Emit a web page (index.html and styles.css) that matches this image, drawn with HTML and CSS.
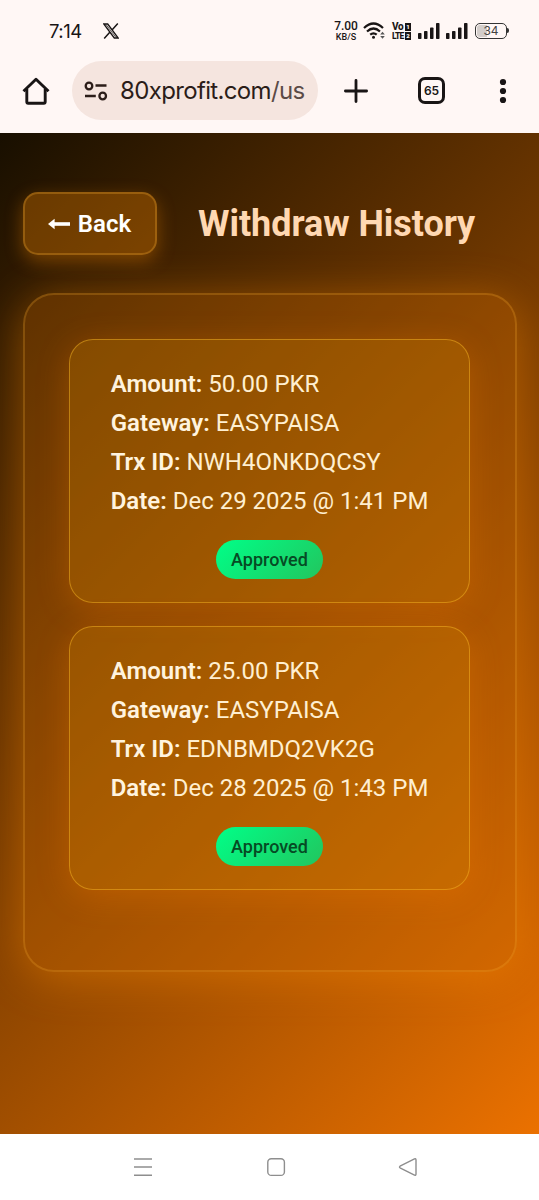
FILE: index.html
```html
<!DOCTYPE html>
<html lang="en">
<head>
<meta charset="utf-8">
<title>Withdraw History</title>
<link rel="stylesheet" href="styles.css">
</head>
<body>
<div class="phone">
  <header class="chrome">
    <div class="status">
      <span class="clock">7:14</span>
      <svg class="x-logo" width="16" height="16" viewBox="0 0 16 16" fill="none" stroke="#191515">
        <path d="M.8 1H4.7L15.2 15H11.3Z" stroke-width="1.3"/><path d="M3 1.5L13 14.5" stroke-width=".7"/><path d="M14.8.6L9 7.1M7 9L1.2 15.4" stroke-width="1.5"/>
      </svg>
      <div class="speed"><span class="rate">7.00</span><span class="unit">KB/S</span></div>
      <svg class="wifi" width="23" height="18" viewBox="0 0 23 18" fill="none" stroke="#191515" stroke-width="2.200">
        <path d="M1 6Q10.500 -3 20 6"/><path d="M4 9.500Q10.500 3.500 17 9.500"/><path d="M7.200 12.700Q10.500 10 13.700 12.700"/><circle cx="10.500" cy="15.300" r="1.500" fill="#191515" stroke="none"/>
        <path d="M17.200 12.500L19.500 9.800L21.800 12.500ZM17.200 14L19.500 16.700L21.800 14Z" fill="#555" stroke="none"/>
      </svg>
      <div class="volte">
        <span class="vo">Vo<b>1</b></span><span class="lte">LTE<b>2</b></span>
      </div>
      <svg class="signal" width="22" height="16" viewBox="0 0 22 16" fill="#191515"><rect x="0" y="10" width="3.500" height="6" rx=".8"/><rect x="6" y="8" width="3.500" height="8" rx=".8"/><rect x="12" y="4.500" width="3.500" height="11.500" rx=".8"/><rect x="18" y="0" width="3.500" height="16" rx=".8"/></svg>
      <svg class="signal second" width="22" height="16" viewBox="0 0 22 16" fill="#191515"><rect x="0" y="10" width="3.500" height="6" rx=".8"/><rect x="6" y="8" width="3.500" height="8" rx=".8"/><rect x="12" y="4.500" width="3.500" height="11.500" rx=".8"/><rect x="18" y="0" width="3.500" height="16" rx=".8"/></svg>
      <div class="battery">34</div>
    </div>
    <div class="toolbar">
      <svg class="home" width="28" height="28" viewBox="0 0 28 28" fill="none" stroke="#191515" stroke-width="2.900" stroke-linejoin="round"><path d="M1.500 14.200L14 2.200L26.500 14.200"/><path d="M4.800 12V24.800Q4.800 26.200 6.200 26.200H21.800Q23.200 26.200 23.200 24.800V12"/></svg>
      <div class="address">
        <svg width="24" height="20" viewBox="0 0 24 20" fill="none" stroke="#2b1d19" stroke-width="2.300"><circle cx="5" cy="5" r="3.300"/><path d="M11.500 4.500H22.500M1 15H11.800"/><circle cx="18.700" cy="15" r="3.300"/></svg>
        <span class="url">80xprofit.com<span class="path">/us</span></span>
      </div>
      <svg class="plus" width="24" height="24" viewBox="0 0 24 24" stroke="#191515" stroke-width="2.800" stroke-linecap="round"><path d="M12 1.400V22.600M1.400 12H22.600"/></svg>
      <div class="tabs">65</div>
      <svg class="more" width="8" height="26" viewBox="0 0 8 26" fill="#191515"><circle cx="4" cy="4" r="3.100"/><circle cx="4" cy="13" r="3.100"/><circle cx="4" cy="22" r="3.100"/></svg>
    </div>
  </header>

  <main class="page">
    <div class="heading">
      <a class="back">
        <svg width="22" height="14" viewBox="0 0 22 14" fill="#fff"><path d="M0 7L6.600 1.800V12.200Z"/><path d="M5 5.200H22V8.800H5Z"/></svg>
        <span>Back</span>
      </a>
      <h1>Withdraw History</h1>
    </div>
    <section class="panel">
      <article class="record">
        <div class="details">
          <p><strong>Amount:</strong> 50.00 PKR</p>
          <p><strong>Gateway:</strong> EASYPAISA</p>
          <p><strong>Trx ID:</strong> NWH4ONKDQCSY</p>
          <p><strong>Date:</strong> Dec 29 2025 @ 1:41 PM</p>
        </div>
        <span class="badge">Approved</span>
      </article>
      <article class="record">
        <div class="details">
          <p><strong>Amount:</strong> 25.00 PKR</p>
          <p><strong>Gateway:</strong> EASYPAISA</p>
          <p><strong>Trx ID:</strong> EDNBMDQ2VK2G</p>
          <p><strong>Date:</strong> Dec 28 2025 @ 1:43 PM</p>
        </div>
        <span class="badge">Approved</span>
      </article>
    </section>
  </main>

  <nav class="navbar">
    <svg width="20" height="20" viewBox="0 0 20 20" stroke="#8e8e8e" stroke-width="1.400"><path d="M1 2H19M1 10H19M1 18.300H19"/></svg>
    <svg width="20" height="20" viewBox="0 0 20 20" fill="none" stroke="#8e8e8e" stroke-width="1.400"><rect x="1.800" y="1.800" width="16.600" height="16.600" rx="3.500"/></svg>
    <svg width="20" height="20" viewBox="0 0 20 20" fill="none" stroke="#8e8e8e" stroke-width="1.400" stroke-linejoin="round"><path d="M2 9.200L16.500 1.900Q18 1.400 18 3V17Q18 18.600 16.500 18.100L2 10.800Q1 10 2 9.200Z"/></svg>
  </nav>
</div>
</body>
</html>
```

FILE: styles.css
```css
* { box-sizing: border-box; }
body { margin: 0; font-family: Roboto, sans-serif; }
.phone { width: 539px; height: 1200px; display: flex; flex-direction: column; overflow: hidden; }

.chrome { height: 133px; flex: none; background: #fff7f5; color: #191515; }
.status { display: flex; align-items: center; height: 61px; padding: 1px 30px 0 49px; }
.clock { width: 54px; font: 400 18.5px Inter, sans-serif; letter-spacing: -0.5px; }
.speed { display: flex; flex-direction: column; align-items: center; gap: 1px; width: 24px; margin-left: 215px; font-family: Roboto, sans-serif; font-weight: 500; }
.rate { font-size: 12px; line-height: 11px; letter-spacing: -0.1px; }
.unit { font-size: 9px; line-height: 9px; }
.wifi { margin-left: 5px; }
.volte { display: flex; flex-direction: column; gap: 1px; width: 19px; margin-left: 6px; font-weight: 800; font-size: 10px; line-height: 8px; }
.volte span { display: flex; justify-content: space-between; align-items: center; height: 8px; letter-spacing: -0.4px; }
.volte .lte { font-size: 8.5px; letter-spacing: -0.8px; }
.volte b { width: 6px; height: 8px; background: #191515; color: #fff7f5; font-size: 6px; line-height: 8px; text-align: center; letter-spacing: 0; }
.signal { margin-left: 7px; }
.signal.second { margin-left: 6px; }
.battery { position: relative; width: 32px; height: 16px; margin-left: 7px; border: 1px solid #333; border-radius: 5px; background: linear-gradient(90deg, #d3cdca 36%, transparent 36%); background-clip: content-box; padding: 1px; color: #444; font: 400 12px/12px Inter, sans-serif; text-align: center; }
.battery::after { content: ""; position: absolute; right: -3px; top: 4px; width: 2px; height: 5px; background: #333; border-radius: 0 2px 2px 0; }

.toolbar { display: flex; align-items: center; height: 59px; padding: 0 32px 0 22px; }
.address { display: flex; align-items: center; width: 246px; height: 59px; margin-left: 22px; padding-left: 12px; border-radius: 30px; background: #f5e5df; }
.url { margin-left: 12px; font: 400 24px Inter, sans-serif; letter-spacing: -0.65px; color: #2b1d19; white-space: nowrap; }
.path { color: #5b4b47; }
.plus { margin-left: 26px; }
.tabs { display: flex; align-items: center; justify-content: center; width: 27px; height: 27px; margin-left: 50px; border: 3px solid #191515; border-radius: 7px; font: 600 12px Inter, sans-serif; }
.more { margin-left: 54px; }

.page { height: 1001px; flex: none; padding: 59px 22.5px 0; overflow: hidden; background: linear-gradient(135deg, #180f00, #eb7100); }
.heading { display: flex; align-items: center; height: 63px; }
.back { display: flex; align-items: center; justify-content: center; gap: 8px; width: 134px; height: 63px; border: 2px solid rgba(255, 180, 50, 0.27); border-radius: 15px; background: rgba(255, 140, 0, 0.32); box-shadow: 0 6px 18px rgba(255, 140, 0, 0.36); color: #fff; font-weight: 600; font-size: 24px; }
h1 { margin: 0 0 0 41.5px; font-size: 36px; font-weight: 700; line-height: 48px; letter-spacing: -0.05px; color: #ffd8b2; white-space: nowrap; }

.panel { display: flex; flex-direction: column; gap: 22.5px; height: 679px; margin-top: 38px; padding: 44px 44.5px; border: 2px solid rgba(255, 180, 50, 0.22); border-radius: 31px; background: rgba(215, 112, 0, 0.28); box-shadow: 0 6px 44px rgba(255, 140, 0, 0.42); }
.record { display: flex; flex-direction: column; align-items: center; height: 264px; padding-top: 25px; border: 1px solid rgba(255, 190, 40, 0.45); border-radius: 24px; background: rgba(205, 130, 0, 0.28); box-shadow: 0 6px 32px rgba(255, 130, 0, 0.27); }
.details { color: #ffefd0; font-size: 24px; line-height: 39px; white-space: nowrap; }
.details p { margin: 0; }
.details strong { font-weight: 600; color: #fff3de; }
.badge { width: 107px; height: 39px; margin-top: 19px; border-radius: 20px; background: linear-gradient(135deg, #00ff88, #22c55e); color: #064b24; font-weight: 500; font-size: 18px; line-height: 39px; text-align: center; }

.navbar { display: flex; align-items: center; justify-content: space-between; height: 66px; padding: 0 121px 0 133px; background: #fff; }
```
